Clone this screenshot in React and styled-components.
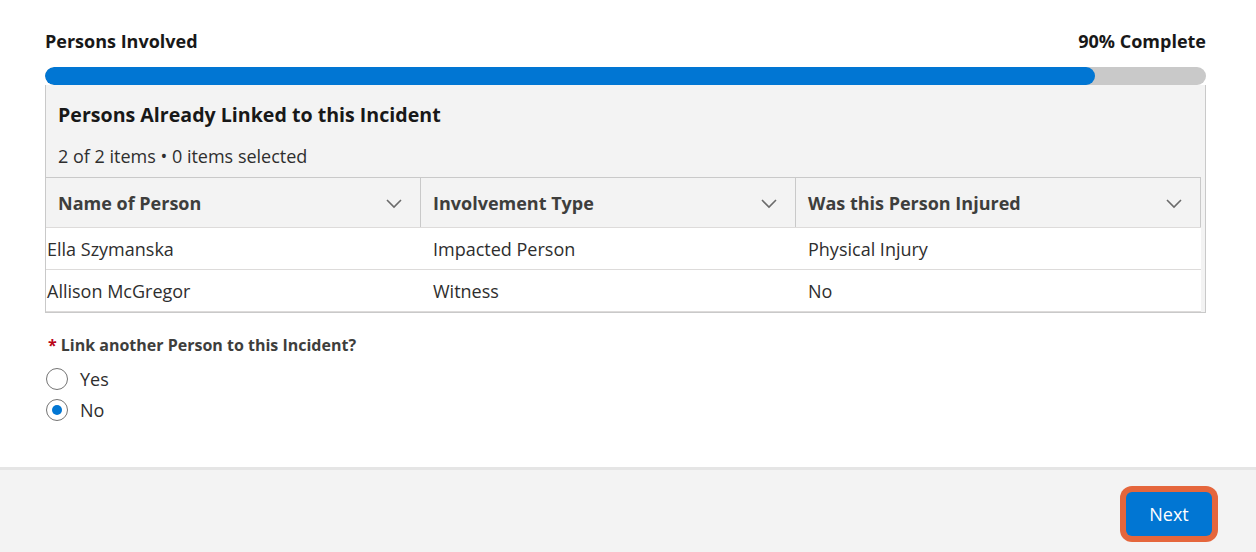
import React from 'react';
import styled, { createGlobalStyle } from 'styled-components';

const GlobalStyle = createGlobalStyle`
  html, body { margin: 0; padding: 0; background: #fff; }
  body { font-family: "Open Sans", "Noto Sans", sans-serif; color: #181818; }
`;

const Page = styled.div`
  width: 1256px;
  height: 552px;
  display: flex;
  flex-direction: column;
  overflow: hidden;
`;

const Body = styled.div`
  flex: 1;
  padding: 28px 50px 0 45px;
`;

const TopRow = styled.div`
  display: flex;
  justify-content: space-between;
  align-items: center;
  font-size: 18px;
  font-weight: 700;
  color: #181818;
  height: 26px;
`;

const Track = styled.div`
  margin-top: 13px;
  height: 18px;
  border-radius: 9px;
  background: #c9c9c9;
  overflow: hidden;
`;

const Fill = styled.div`
  height: 100%;
  background: #0176d3;
  border-radius: 9px;
`;

const Card = styled.div`
  border: 1px solid #c9c9c9;
  border-top: none;
  background: #f3f3f3;
`;

const CardTitle = styled.div`
  font-size: 19.6px;
  font-weight: 700;
  padding: 15px 12px 0;
  height: 30px;
  line-height: 30px;
`;

const Meta = styled.div`
  font-size: 18px;
  color: #2e2e2e;
  padding: 11px 12px 0;
  margin-bottom: 6px;
  height: 30px;
  line-height: 30px;
`;

const Table = styled.div`
  margin-top: 1px;
  border-top: 1px solid #c9c9c9;
  margin-right: 4px;
`;

const Row = styled.div`
  display: grid;
  grid-template-columns: 375px 375px 1fr;
  height: ${p => (p.$head ? 49 : 41)}px;
  background: ${p => (p.$head ? '#f3f3f3' : '#fff')};
  border-bottom: 1px solid #dddbda;
`;

const HeadCell = styled.div`
  display: flex;
  align-items: center;
  justify-content: space-between;
  padding: 0 17px 0 12px;
  font-size: 18px;
  font-weight: 700;
  color: #3e3e3c;
  border-right: 1px solid #c9c9c9;
`;

const Cell = styled.div`
  display: flex;
  align-items: center;
  padding-left: ${p => (p.$first ? 1 : 12)}px;
  font-size: 18px;
  color: #2e2e2e;
`;

const Question = styled.div`
  margin-top: 20px;
  font-size: 16px;
  font-weight: 700;
  color: #3e3e3c;
  padding-left: 3px;
  display: flex;
  align-items: center;
  gap: 4px;
  height: 24px;
`;

const Req = styled.span`
  color: #ba0517;
  font-weight: 700;
`;

const Options = styled.div`
  margin-top: 10px;
  display: flex;
  flex-direction: column;
  gap: 8px;
`;

const Option = styled.label`
  display: flex;
  align-items: center;
  gap: 12px;
  font-size: 18px;
  color: #2e2e2e;
  height: 23px;
`;

const Radio = styled.span`
  width: 22px;
  height: 22px;
  box-sizing: border-box;
  border-radius: 50%;
  border: 1px solid #747474;
  background: #fff;
  display: flex;
  align-items: center;
  justify-content: center;
  margin-left: 1px;
  &::after {
    content: '';
    width: 10px;
    height: 10px;
    border-radius: 50%;
    background: ${p => (p.$on ? '#0176d3' : 'transparent')};
  }
`;

const Footer = styled.div`
  height: 82px;
  border-top: 3px solid #e5e5e5;
  background: #f3f3f3;
  display: flex;
  justify-content: flex-end;
  align-items: center;
  padding-right: 44px;
`;

const NextButton = styled.button`
  width: 86px;
  height: 44px;
  background: #0176d3;
  color: #fff;
  border: none;
  border-radius: 6px;
  font-family: inherit;
  font-size: 18px;
  box-shadow: 0 0 0 6px #e5663c;
  margin-top: 6px;
`;

const Chevron = () => (
  <svg width="18" height="18" viewBox="0 0 18 18" fill="none">
    <path d="M2 6 L9 13 L16 6" stroke="#6b6b6b" strokeWidth="1.6" />
  </svg>
);

const columns = ['Name of Person', 'Involvement Type', 'Was this Person Injured'];
const people = [
  ['Ella Szymanska', 'Impacted Person', 'Physical Injury'],
  ['Allison McGregor', 'Witness', 'No'],
];

export default function App() {
  return (
    <Page>
      <GlobalStyle />
      <Body>
        <TopRow>
          <span>Persons Involved</span>
          <span>90% Complete</span>
        </TopRow>
        <Track>
          <Fill style={{ width: '90.4%' }} />
        </Track>
        <Card>
          <CardTitle>Persons Already Linked to this Incident</CardTitle>
          <Meta>2 of 2 items • 0 items selected</Meta>
          <Table>
            <Row $head>
              {columns.map(c => (
                <HeadCell key={c}>
                  {c}
                  <Chevron />
                </HeadCell>
              ))}
            </Row>
            {people.map(p => (
              <Row key={p[0]}>
                {p.map((v, i) => (
                  <Cell key={i} $first={i === 0}>{v}</Cell>
                ))}
              </Row>
            ))}
          </Table>
        </Card>
        <Question>
          <Req>*</Req>Link another Person to this Incident?
        </Question>
        <Options>
          <Option><Radio />Yes</Option>
          <Option><Radio $on />No</Option>
        </Options>
      </Body>
      <Footer>
        <NextButton>Next</NextButton>
      </Footer>
    </Page>
  );
}
